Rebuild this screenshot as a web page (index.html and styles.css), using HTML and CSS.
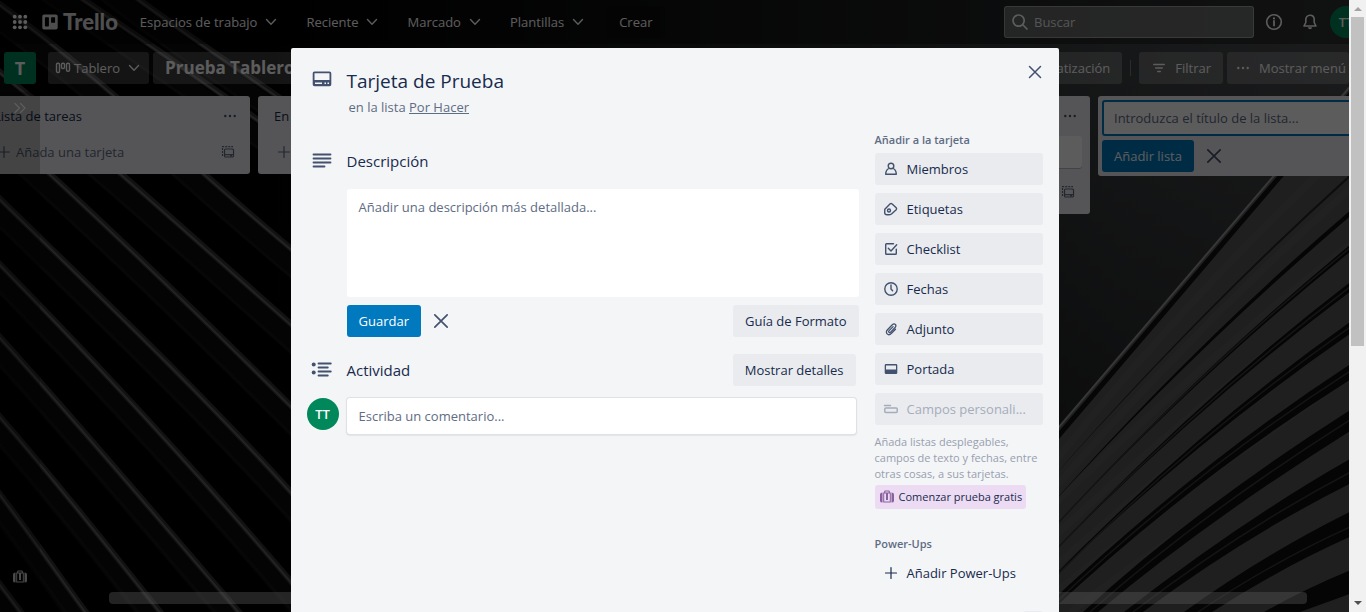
FILE: index.html
```html
<!DOCTYPE html>
<html lang="es">
<head>
<meta charset="utf-8">
<title>Tarjeta de Prueba | Trello</title>
<link rel="stylesheet" href="styles.css">
</head>
<body>
<svg class="sprite" aria-hidden="true">
  <symbol id="chevron" viewBox="0 0 16 16"><path d="M3.500 5.500 8 10.200l4.500-4.700" fill="none" stroke="currentColor" stroke-width="1.400" stroke-linecap="round" stroke-linejoin="round"/></symbol>
  <symbol id="close" viewBox="0 0 16 16"><path d="m2.500 2.500 11 11m0-11-11 11" fill="none" stroke="currentColor" stroke-width="1.500" stroke-linecap="round"/></symbol>
  <symbol id="plus" viewBox="0 0 16 16"><path d="M8 2.500v11M2.500 8h11" fill="none" stroke="currentColor" stroke-width="1.200" stroke-linecap="round"/></symbol>
  <symbol id="dots" viewBox="0 0 16 16"><g fill="currentColor"><circle cx="3.300" cy="8" r="1.200"/><circle cx="8" cy="8" r="1.200"/><circle cx="12.700" cy="8" r="1.200"/></g></symbol>
  <symbol id="template" viewBox="0 0 16 16"><g fill="none" stroke="currentColor" stroke-width="1.200"><path d="M2.500 12V2.700H13" stroke-dasharray="2 1"/><rect x="4.500" y="5" width="9" height="8" rx="1"/><path d="M4.500 10.700h9"/></g><path d="M10 10.500h2v2h-2z" fill="currentColor"/></symbol>
  <symbol id="case" viewBox="0 0 16 16"><path d="M5.700 4V2.700q0-.7.700-.7h3.200q.7 0 .7.700V4" fill="none" stroke="currentColor" stroke-width="1.200"/><rect x="4.700" y="4" width="6.600" height="9" fill="none" stroke="currentColor" stroke-width="1"/><path d="M3.500 3.500v10Q1 13.500 1 12V5.500q0-2 2.500-2zM12.500 3.500v10q2.500 0 2.500-1.500V5.500q0-2-2.500-2zM7 4h2v7H7z" fill="currentColor"/></symbol>
</svg>

<div class="viewport">
  <div class="app">
    <svg class="wallpaper" viewBox="0 0 1366 612" preserveAspectRatio="xMinYMin slice" aria-hidden="true">
      <defs>
        <linearGradient id="sky" x1="0" x2="1"><stop offset=".2" stop-color="#020202"/><stop offset=".5" stop-color="#1c1d1e"/><stop offset=".82" stop-color="#3e4143"/><stop offset="1" stop-color="#4a4b4e"/></linearGradient>
        <linearGradient id="shade" x1="0" y1="0" x2="0" y2="1"><stop offset=".1" stop-color="#000" stop-opacity="0"/><stop offset=".8" stop-color="#000" stop-opacity=".45"/></linearGradient>
        <g id="ribs">
          <path d="M0-58C90 5 190 70 300 150"/>
          <path d="M100-30C160 18 230 62 300 112"/>
          <path d="M-10-3C100 75 200 174 300 256"/>
          <path d="M-10 64C90 143 200 244 300 332"/>
          <path d="M-10 119C100 218 200 315 300 415"/>
          <path d="M-10 189C80 277 200 390 300 502"/>
          <path d="M-10 254C100 366 200 474 300 592"/>
          <path d="M-10 326C90 436 180 544 246 620"/>
          <path d="M-10 405C80 508 130 576 167 620"/>
          <path d="M-10 481C40 546 70 592 92 620"/>
          <path d="M-10 571 27 620"/>
        </g>
      </defs>
      <rect width="1366" height="612" fill="url(#sky)"/>
      <rect width="1366" height="612" fill="url(#shade)"/>
      <g fill="none">
        <use href="#ribs" y="17" stroke="#0c0c0d" stroke-width="20"/>
        <use href="#ribs" y="28" stroke="#151515" stroke-width="3"/>
        <use href="#ribs" stroke="#333" stroke-width="6"/>
        <use href="#ribs" y="1" stroke="#606060" stroke-width="2"/>
      </g>
      <path d="M1366 68C1290 158 1160 310 1000 496V612H1366z" fill="#58585a"/>
      <path d="M1366 76C1290 166 1160 318 1000 504" fill="none" stroke="#111" stroke-width="5"/>
      <path d="M1366 68C1290 158 1160 310 1000 496" fill="none" stroke="#999" stroke-width="2"/>
      <g fill="none" stroke="#626264" stroke-width="7" opacity=".4">
        <path d="M1366 130Q1200 280 1040 480"/><path d="M1366 175Q1200 320 1040 505"/><path d="M1366 232Q1200 362 1040 518"/><path d="M1366 275Q1200 400 1040 550"/><path d="M1366 318Q1200 435 1040 580"/><path d="M1366 366Q1200 475 1040 605"/><path d="M1366 412Q1200 514 1070 612"/><path d="M1366 463Q1230 543 1130 612"/>
      </g>
      <g fill="#080808" opacity=".9">
        <path d="M1366 160Q1200 308 1040 492Q1200 311 1366 163z" opacity=".7"/>
        <path d="M1366 197Q1200 337 1040 517Q1200 342 1366 203z"/>
        <path d="M1366 232Q1200 366 1040 542Q1200 371 1366 239z"/>
        <path d="M1366 270Q1200 395 1040 566Q1200 402 1366 280z"/>
        <path d="M1366 311Q1200 425 1040 590Q1200 435 1366 323z"/>
        <path d="M1366 354Q1200 460 1040 612H1050Q1200 472 1366 370z"/>
        <path d="M1366 400Q1200 504 1083 612H1098Q1210 518 1366 421z"/>
        <path d="M1366 450Q1250 514 1124 612H1143Q1250 532 1366 476z"/>
        <path d="M1366 504Q1270 550 1184 612H1212Q1290 562 1366 530z"/>
        <path d="M1366 564Q1310 586 1264 612H1300L1366 588z"/>
      </g>
      <g fill="none" stroke="#3a3a3c" stroke-width="1.500">
        <path d="M1366 235Q1200 368 1050 532"/><path d="M1366 275Q1200 399 1050 556"/><path d="M1366 316Q1200 430 1050 582"/><path d="M1366 361Q1200 465 1050 608"/><path d="M1366 410Q1205 510 1090 612"/><path d="M1366 464Q1250 523 1133 612"/><path d="M1366 520Q1280 557 1198 612"/>
      </g>
    </svg>

    <header class="topbar">
      <button class="icon-btn apps" aria-label="Aplicaciones"><svg width="16" height="16" viewBox="0 0 16 16" fill="currentColor"><g id="r"><circle cx="2.700" cy="2.700" r="1.900"/><circle cx="8" cy="2.700" r="1.900"/><circle cx="13.300" cy="2.700" r="1.900"/></g><use href="#r" y="5.300"/><use href="#r" y="10.600"/></svg></button>
      <a class="logo" href="#"><svg width="16" height="16" viewBox="0 0 16 16"><path fill="currentColor" fill-rule="evenodd" d="M2 .5h12q1.700 0 1.700 1.700v11.600q0 1.700-1.700 1.700H2Q.3 15.500.3 13.800V2.200Q.3.500 2 .5zM3.500 3.200q-.6 0-.6.600v8q0 .6.600.6h2.800q.6 0 .6-.6v-8q0-.6-.6-.6zm6.200 0q-.6 0-.6.600v4.400q0 .6.600.6h2.800q.6 0 .6-.6V3.800q0-.6-.6-.6z"/></svg><span>Trello</span></a>
      <nav class="menu">
        <button>Espacios de trabajo<svg><use href="#chevron"/></svg></button>
        <button>Reciente<svg><use href="#chevron"/></svg></button>
        <button>Marcado<svg><use href="#chevron"/></svg></button>
        <button>Plantillas<svg><use href="#chevron"/></svg></button>
        <button class="create">Crear</button>
      </nav>
      <label class="search"><svg width="18" height="18" viewBox="0 0 18 18" fill="none" stroke="currentColor" stroke-width="1.700" stroke-linecap="round"><circle cx="7.600" cy="7.600" r="5.600"/><path d="m12 12 4 4"/></svg><input type="search" placeholder="Buscar" aria-label="Buscar"></label>
      <button class="icon-btn" aria-label="Información"><svg width="18" height="18" viewBox="0 0 18 18"><circle cx="9" cy="9" r="7.300" fill="none" stroke="currentColor" stroke-width="1.600"/><path d="M9 8v4.500" stroke="currentColor" stroke-width="1.800" stroke-linecap="round"/><circle cx="9" cy="5.400" r="1.100" fill="currentColor"/></svg></button>
      <button class="icon-btn" aria-label="Notificaciones"><svg width="18" height="18" viewBox="0 0 18 18"><path d="M9 2.200c-2.600 0-4.200 1.900-4.200 4.400v2.900L3 13h12l-1.800-3.500V6.600c0-2.500-1.600-4.400-4.200-4.400z" fill="none" stroke="currentColor" stroke-width="1.600" stroke-linejoin="round"/><path d="M7 14.300h4a2 2 0 0 1-4 0z" fill="currentColor"/></svg></button>
      <button class="avatar">TT</button>
    </header>

    <div class="boardbar">
      <button class="workspace">T</button>
      <button class="board-btn view"><svg width="16" height="16" viewBox="0 0 16 16" fill="none" stroke="currentColor" stroke-width="1.400"><rect x="1.500" y="3.200" width="3" height="9.300" rx="1.300"/><rect x="6.500" y="3.200" width="3" height="5.300" rx="1.300"/><rect x="11.500" y="3.200" width="3" height="8" rx="1.300"/></svg>Tablero<svg class="glyph"><use href="#chevron"/></svg></button>
      <h1 class="board-btn board-name">Prueba Tablero</h1>
      <span class="spacer"></span>
      <button class="board-btn">Automatización</button>
      <span class="divider"></span>
      <button class="board-btn filter"><svg width="16" height="16" viewBox="0 0 16 16" stroke="currentColor" stroke-width="1.400" stroke-linecap="round"><path d="M2.700 4.500h10.600M4.700 8h6.600M6.700 11.500h2.600"/></svg>Filtrar</button>
      <button class="board-btn show-menu"><svg class="glyph"><use href="#dots"/></svg>Mostrar menú</button>
    </div>

    <main class="board">
      <section class="list">
        <header><h2>Lista de tareas</h2><button aria-label="Acciones"><svg class="glyph"><use href="#dots"/></svg></button></header>
        <footer><button><svg class="glyph"><use href="#plus"/></svg>Añada una tarjeta</button><button aria-label="Crear a partir de plantilla"><svg class="glyph"><use href="#template"/></svg></button></footer>
      </section>
      <section class="list">
        <header><h2>En proceso</h2><button aria-label="Acciones"><svg class="glyph"><use href="#dots"/></svg></button></header>
        <footer><button aria-label="Añada una tarjeta"><svg class="glyph"><use href="#plus"/></svg></button></footer>
      </section>
      <section class="list"></section>
      <section class="list">
        <header><h2></h2><button aria-label="Acciones"><svg class="glyph"><use href="#dots"/></svg></button></header>
        <div class="card"></div>
        <footer><span></span><button aria-label="Crear a partir de plantilla"><svg class="glyph"><use href="#template"/></svg></button></footer>
      </section>
      <form class="list add-list">
        <input type="text" placeholder="Introduzca el título de la lista..." aria-label="Título de la lista">
        <div class="actions"><button type="button" class="primary">Añadir lista</button><button type="button" class="cancel" aria-label="Cancelar"><svg><use href="#close"/></svg></button></div>
      </form>
    </main>

    <aside class="drawer"><button aria-label="Expandir barra lateral"><svg width="16" height="16" viewBox="0 0 16 16" fill="none" stroke="currentColor" stroke-width="1.300" stroke-linecap="round" stroke-linejoin="round"><path d="m3 3.500 4.500 4.500L3 12.500M8.500 3.500 13 8l-4.500 4.500"/></svg></button><svg class="glyph"><use href="#case"/></svg></aside>
    <div class="hscroll"></div>

    <div class="overlay">
      <div class="dialog" role="dialog" aria-labelledby="card-title">
        <button class="dismiss" aria-label="Cerrar"><svg class="glyph"><use href="#close"/></svg></button>
        <div class="dialog-head">
          <svg class="lead" viewBox="0 0 20 20"><path fill="currentColor" fill-rule="evenodd" d="M2.500 2.500h15Q19.300 2.500 19.300 4.300v11.200q0 1.800-1.800 1.800h-15Q.7 17.300.7 15.500V4.300Q.7 2.500 2.500 2.500zM2.500 4.200v6.900h15V4.200zM3 13.500V15h7v-1.500zm9.500 0V15H14v-1.500zm3 0V15H17v-1.500z"/></svg>
          <div><h2 id="card-title">Tarjeta de Prueba</h2><p>en la lista <a href="#">Por Hacer</a></p></div>
        </div>
        <div class="columns">
          <div class="main">
            <section class="block desc">
              <svg class="lead" viewBox="0 0 20 20" stroke="currentColor" stroke-width="1.800" stroke-linecap="round"><path d="M1.500 3.500h17M1.500 7.500h17M1.500 11.500h17M1.500 15.500h11"/></svg>
              <h3><label for="desc">Descripción</label></h3>
              <div class="content">
                <textarea id="desc" placeholder="Añadir una descripción más detallada..."></textarea>
                <div class="actions"><button class="primary">Guardar</button><button class="cancel" aria-label="Cancelar"><svg><use href="#close"/></svg></button><button class="subtle">Guía de Formato</button></div>
              </div>
            </section>
            <section class="block activity">
              <svg class="lead" viewBox="0 0 20 20" stroke="currentColor" stroke-width="1.800" stroke-linecap="round"><path d="M6.500 3.500h12.300M6.500 7.500h9.300M6.500 11.500h12.300M6.500 15.500h9.300"/><g fill="currentColor" stroke="none"><circle cx="1.700" cy="4.500" r="2"/><circle cx="1.700" cy="12.500" r="2"/></g></svg>
              <div class="title-row"><h3>Actividad</h3><button class="subtle">Mostrar detalles</button></div>
              <span class="avatar me">TT</span>
              <input type="text" placeholder="Escriba un comentario..." aria-label="Comentario">
            </section>
          </div>
          <aside class="side">
            <h4>Añadir a la tarjeta</h4>
            <div class="stack">
              <button><svg viewBox="0 0 16 16"><g fill="none" stroke="currentColor" stroke-width="1.400"><circle cx="8" cy="5" r="2.800"/><path d="M5.800 7.500C3.500 8.700 2.700 10.500 2.700 13.300h10.600c0-2.800-.8-4.600-3.100-5.800" stroke-linejoin="round"/></g></svg>Miembros</button>
              <button><svg viewBox="0 0 16 16"><g fill="none" stroke="currentColor" stroke-width="1.400" stroke-linejoin="round"><path d="M1.800 8.200 7.200 2.800q1-.8 2 .2l4 3.800q.8 1 0 2L8.500 13c-1 .8-2 .8-3 .8H4c-1.500 0-2.300-1-2.300-2.300z"/><circle cx="6" cy="9.500" r="1.500"/></g></svg>Etiquetas</button>
              <button><svg viewBox="0 0 16 16"><path d="M10.500 2.700h-7q-.8 0-.8.800v9q0 .8.800.8h9q.8 0 .8-.8V8.200M5.300 7.300 8 10l5.700-6.300" fill="none" stroke="currentColor" stroke-width="1.400" stroke-linecap="round" stroke-linejoin="round"/></svg>Checklist</button>
              <button><svg viewBox="0 0 16 16"><g fill="none" stroke="currentColor" stroke-width="1.400" stroke-linecap="round"><circle cx="8" cy="8" r="6.200"/><path d="M8 4v4l1.600 1.800"/></g></svg>Fechas</button>
              <button><svg viewBox="0 0 16 16"><path d="m12.500 8.300-4 4c-3.300 3.300-7-.5-4-3.600l4.800-4.900c2.300-2.200 5 .5 2.800 2.700l-4.500 4.600c-1.200 1.200-2.700-.3-1.500-1.500l4-4" fill="none" stroke="currentColor" stroke-width="1.300" stroke-linecap="round"/></svg>Adjunto</button>
              <button><svg viewBox="0 0 16 16"><path fill="currentColor" fill-rule="evenodd" d="M3 3h10q1.300 0 1.300 1.300v7.400q0 1.300-1.300 1.300H3q-1.300 0-1.300-1.300V4.300Q1.700 3 3 3zm0 1.500V8.500h10V4.500z"/></svg>Portada</button>
              <button disabled><svg viewBox="0 0 16 16"><g fill="none" stroke="currentColor" stroke-width="1.500" stroke-linecap="round"><path d="M1.500 4.500h6"/><rect x="1.800" y="7" width="12.400" height="4.500" rx="1"/></g></svg><span>Campos personali...</span></button>
            </div>
            <p class="note">Añada listas desplegables, campos de texto y fechas, entre otras cosas, a sus tarjetas.</p>
            <button class="trial"><svg class="glyph"><use href="#case"/></svg>Comenzar prueba gratis</button>
            <h4>Power-Ups</h4>
            <button class="add-power"><svg class="glyph"><use href="#plus"/></svg>Añadir Power-Ups</button>
            <button class="help" aria-label="Información"></button>
          </aside>
        </div>
      </div>
    </div>
  </div>
  <div class="scrollbar" aria-hidden="true"><i class="up"></i><div class="thumb"></div><i class="down"></i></div>
</div>
</body>
</html>
```
FILE: styles.css
```css
* { box-sizing: border-box; }
body { margin: 0; font: 13px/20px "Open Sans", "Noto Sans", sans-serif; color: #172b4d; background: #000; }
button, input, textarea { font: inherit; color: inherit; border: 0; margin: 0; padding: 0; background: none; }
button { display: flex; align-items: center; flex-shrink: 0; white-space: nowrap; cursor: pointer; }
h1, h2, h3, h4, p { margin: 0; }
svg { flex-shrink: 0; }
.sprite { position: absolute; width: 0; height: 0; }
.glyph { width: 16px; height: 16px; }

.viewport { display: grid; grid-template-columns: minmax(0, 1fr) 17px; height: 100vh; overflow: hidden; }
.app { position: relative; overflow: hidden; display: flex; flex-direction: column; }
.wallpaper { position: absolute; inset: 0; width: 100%; height: 100%; }

.topbar { position: relative; display: flex; align-items: center; height: 44px; padding-left: 8px; background: rgba(0,0,0,.35); color: #fff; flex-shrink: 0; }
.topbar > .icon-btn, .topbar > .avatar { margin-right: 4px; }
.icon-btn { width: 32px; height: 32px; justify-content: center; }
.topbar > .apps { width: 24px; margin-right: 10px; }
.logo { display: flex; align-items: center; gap: 5px; color: #fff; text-decoration: none; font: 900 22px/24px Lato, sans-serif; opacity: .85; }
.menu { display: flex; gap: 9px; margin-left: 10px; flex: 1; }
.menu button { height: 32px; padding: 0 6px 0 12px; gap: 6px; border-radius: 3px; }
.menu svg { width: 16px; height: 16px; }
.menu .create { padding: 0 12px; margin-left: 6px; background: rgba(0,0,0,.2); }
.search { display: flex; align-items: center; gap: 5px; width: 250px; height: 32px; padding-left: 6px; margin-right: 4px; border: 1px solid rgba(255,255,255,.35); border-radius: 3px; background: rgba(255,255,255,.3); }
.search input { flex: 1; min-width: 0; outline: 0; }
.search input::placeholder { color: #fff; opacity: .85; }
.avatar { display: flex; align-items: center; justify-content: center; flex-shrink: 0; width: 32px; height: 32px; border-radius: 50%; background: #00875a; color: #fff; font-weight: 600; }
.topbar > .avatar { margin: 0 -13px 0 0; }

.boardbar { position: relative; display: flex; align-items: center; gap: 4px; height: 48px; padding-left: 4px; color: #fff; flex-shrink: 0; }
.board-btn { display: flex; align-items: center; height: 32px; padding: 0 12px; border-radius: 3px; background: rgba(255,255,255,.22); white-space: nowrap; }
.workspace { width: 32px; height: 32px; justify-content: center; margin-right: 8px; border-radius: 3px; background: #00875a; font-size: 18px; font-weight: 700; }
.view { padding: 0 7px; gap: 3px; }
.view .glyph { margin-left: 3px; }
.board-name { font-size: 17px; font-weight: 700; }
.spacer { flex: 1; }
.divider { width: 1px; height: 16px; margin: 0 4px; background: rgba(255,255,255,.3); }
.filter { gap: 8px; }
.show-menu { gap: 8px; padding: 0 0 0 8px; width: 122px; }

.board { position: relative; display: flex; align-items: flex-start; gap: 8px; margin: 4px 0 0 -22px; }
.list { flex: 0 0 272px; border-radius: 3px; background: #ebecf0; min-height: 78px; }
.list header { display: flex; align-items: center; justify-content: space-between; height: 40px; padding: 0 12px 0 16px; }
.list header button { color: #42526e; }
.list h2 { font-size: 13px; font-weight: 500; }
.list footer { display: flex; align-items: center; justify-content: space-between; height: 32px; padding: 0 14px 0 18px; color: #5e6c84; margin-bottom: 6px; }
.list footer button { gap: 4px; }
.card { height: 32px; margin: 0 8px 8px; border-radius: 3px; background: #fff; box-shadow: 0 1px 0 #091e4240; }
.add-list { padding: 4px; }
.add-list input { display: block; width: 100%; height: 36px; padding: 0 10px; border: 2px solid #0079bf; border-radius: 3px; background: #fff; }
.actions { display: flex; align-items: center; }
.add-list .actions { margin-top: 4px; }
.primary { height: 32px; padding: 0 12px; border-radius: 3px; background: #0079bf; color: #fff; }
.cancel { width: 40px; height: 32px; justify-content: center; color: #42526e; }
.cancel svg { width: 18px; height: 18px; }
::placeholder { color: #5e6c84; opacity: 1; }

.drawer { position: absolute; top: 92px; bottom: 0; left: 0; width: 40px; padding: 8px 12px 27px; display: flex; flex-direction: column; justify-content: space-between; background: rgba(0,0,0,.2); color: #ccc; }
.drawer button { color: #fff; }
.hscroll { position: absolute; left: 109px; right: 42px; bottom: 8px; height: 12px; border-radius: 4px; background: rgba(255,255,255,.38); }

.overlay { position: absolute; inset: 0; overflow: hidden; background: rgba(0,0,0,.64); }
.dialog { position: relative; width: 768px; margin: 48px auto; min-height: 640px; padding: 0 16px; border-radius: 2px; background: #f4f5f7; }
.dismiss { position: absolute; top: 16px; right: 16px; width: 16px; height: 16px; color: #42526e; }
.lead { width: 20px; height: 20px; margin-left: 5px; color: #42526e; overflow: visible; }
.dialog-head { display: grid; grid-template-columns: 40px 1fr; padding-top: 21px; }
.dialog-head h2 { font-size: 19px; line-height: 24px; font-weight: 500; }
.dialog-head p { padding: 4px 0 0 2px; color: #5e6c84; }
.dialog-head a { color: inherit; }
.columns { display: grid; grid-template-columns: minmax(0, 1fr) 168px; gap: 16px; padding-top: 15px; }
.block { display: grid; grid-template-columns: 40px minmax(0, 1fr); }
.block h3 { font-size: 15px; line-height: 20px; font-weight: 500; }
.desc { padding-top: 19px; }
.content { grid-column: 2; padding-top: 18px; }
.block textarea { display: block; width: 100%; height: 108px; padding: 8px 12px; border-radius: 3px; background: #fff; resize: none; }
.content .actions { margin-top: 8px; }
.subtle, .stack button { height: 32px; padding: 0 12px; border-radius: 3px; background: #eaebef; }
.subtle { margin-left: auto; }
.activity { align-items: center; row-gap: 12px; padding: 17px 3px 0 0; }
.title-row { display: flex; align-items: center; }
.activity input { height: 36px; padding: 0 12px; border-radius: 3px; background: #fff; box-shadow: 0 0 0 1px #dfe1e6, 0 1px 2px #091e4240; }
.me { margin-bottom: 4px; }
.side h4 { font-size: 11px; line-height: 16px; font-weight: 600; color: #5e6c84; padding-bottom: 5px; }
.stack { display: grid; grid-template-columns: minmax(0, 1fr); gap: 8px; }
.stack button, .add-power { width: 100%; padding: 0 8px; gap: 8px; }
.stack svg { width: 16px; height: 16px; color: #42526e; }
.stack button:disabled, .stack button:disabled svg { color: #a5adba; }
.note { padding: 9px 0 3px; font-size: 11px; line-height: 16px; color: #97a0af; }
.trial { height: 24px; padding: 0 4px; gap: 4px; margin-bottom: 27px; border-radius: 3px; background: #eddbf4; font-size: 11px; }
.trial svg { color: #89609e; }
.add-power { height: 32px; }
.help { width: 20px; height: 20px; margin: 22px 0 0 auto; border-radius: 3px; background: #eaebef; }

.scrollbar { display: flex; flex-direction: column; align-items: center; padding: 7px 0; background: #f1f1f1; }
.scrollbar i { width: 0; height: 0; border: 4px solid transparent; }
.up { border-top: 0 !important; border-bottom-color: #a3a3a3 !important; }
.down { margin-top: auto; border-bottom: 0 !important; border-top-color: #505050 !important; }
.thumb { width: 13px; height: 55%; margin-top: 6px; background: #c1c1c1; }
```
